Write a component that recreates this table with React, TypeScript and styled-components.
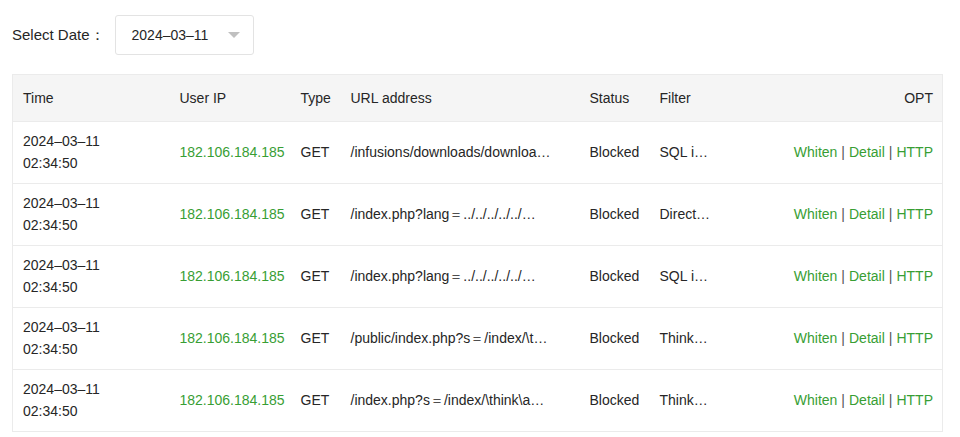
import styled, { createGlobalStyle } from 'styled-components';

const GlobalStyle = createGlobalStyle`
    body {
        margin: 0;
        background: #ffffff;
        font-family: "Liberation Sans", Arial, sans-serif;
        font-size: 14px;
        color: #262626;
    }
`;

const Page = styled.div`
    padding: 15px 17px 0 12px;
`;

const FilterBar = styled.div`
    display: flex;
    align-items: center;
    gap: 10px;
    margin-bottom: 19px;
`;

const FilterLabel = styled.span`
    font-size: 15px;
    color: #262626;
`;

const DateSelect = styled.div`
    width: 139px;
    height: 40px;
    box-sizing: border-box;
    border: 1px solid #e3e3e3;
    border-radius: 3px;
    display: flex;
    align-items: center;
    justify-content: space-between;
    padding: 0 13px 0 16px;
    font-size: 14px;
`;

const Caret = styled.span`
    width: 0;
    height: 0;
    border-left: 6px solid transparent;
    border-right: 6px solid transparent;
    border-top: 6px solid #c0c0c0;
`;

const Table = styled.table`
    width: 931px;
    border-collapse: collapse;
    table-layout: fixed;
    border: 1px solid #ebebeb;
`;

const Col = styled.col<{ $w: number }>`
    width: ${p => p.$w}px;
`;

const HeadCell = styled.th<{ $right?: boolean }>`
    background: #f5f5f5;
    font-weight: normal;
    text-align: ${p => (p.$right ? 'right' : 'left')};
    padding: 12px 9px 12px 10px;
    line-height: 22px;
    border-bottom: 1px solid #ebebeb;
    color: #262626;
    white-space: nowrap;
`;

const Cell = styled.td<{ $right?: boolean }>`
    padding: 8px 9px 9px 10px;
    line-height: 22px;
    border-bottom: 1px solid #ebebeb;
    text-align: ${p => (p.$right ? 'right' : 'left')};
    white-space: nowrap;
`;

const TimeText = styled.div`
    white-space: normal;
    width: 80px;
`;

const Green = styled.span`
    color: #389e34;
`;

const Divider = styled.span`
    color: #555555;
    margin: 0 4px;
`;

type LogRow = { url: string; filter: string };

const rows: LogRow[] = [
    { url: '/infusions/downloads/downloa…', filter: 'SQL i…' },
    { url: '/index.php?lang＝../../../../../…', filter: 'Direct…' },
    { url: '/index.php?lang＝../../../../../…', filter: 'SQL i…' },
    { url: '/public/index.php?s＝/index/\\t…', filter: 'Think…' },
    { url: '/index.php?s＝/index/\\think\\a…', filter: 'Think…' },
];

export default function App() {
    return (
        <>
            <GlobalStyle />
            <Page>
                <FilterBar>
                    <FilterLabel>Select Date：</FilterLabel>
                    <DateSelect>
                        <span>2024–03–11</span>
                        <Caret />
                    </DateSelect>
                </FilterBar>
                <Table>
                    <colgroup>
                        <Col $w={157} />
                        <Col $w={121} />
                        <Col $w={50} />
                        <Col $w={239} />
                        <Col $w={70} />
                        <Col $w={72} />
                        <col />
                    </colgroup>
                    <thead>
                        <tr>
                            <HeadCell>Time</HeadCell>
                            <HeadCell>User IP</HeadCell>
                            <HeadCell>Type</HeadCell>
                            <HeadCell>URL address</HeadCell>
                            <HeadCell>Status</HeadCell>
                            <HeadCell>Filter</HeadCell>
                            <HeadCell $right>OPT</HeadCell>
                        </tr>
                    </thead>
                    <tbody>
                        {rows.map((r, i) => (
                            <tr key={i}>
                                <Cell>
                                    <TimeText>2024–03–11 02:34:50</TimeText>
                                </Cell>
                                <Cell><Green>182.106.184.185</Green></Cell>
                                <Cell>GET</Cell>
                                <Cell>{r.url}</Cell>
                                <Cell>Blocked</Cell>
                                <Cell>{r.filter}</Cell>
                                <Cell $right>
                                    <Green>Whiten</Green>
                                    <Divider>|</Divider>
                                    <Green>Detail</Green>
                                    <Divider>|</Divider>
                                    <Green>HTTP</Green>
                                </Cell>
                            </tr>
                        ))}
                    </tbody>
                </Table>
            </Page>
        </>
    );
}
